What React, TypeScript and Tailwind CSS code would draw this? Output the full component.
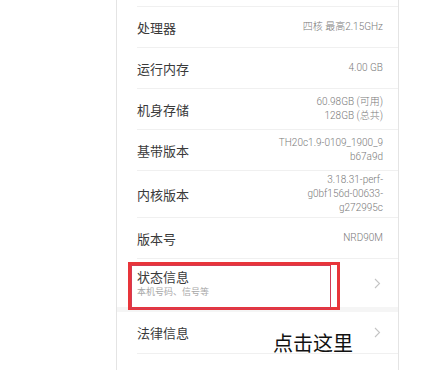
import React from "react";

const font = { fontFamily: '"Noto Sans CJK SC", "Noto Sans", sans-serif' };
const valFont = { fontFamily: 'Roboto, "Noto Sans CJK SC", sans-serif' };

function Chevron() {
  return (
    <svg width="7" height="11" viewBox="0 0 7 11" fill="none">
      <path d="M1 1 L5.5 5.5 L1 10" stroke="#c4c4c4" strokeWidth="1.1" />
    </svg>
  );
}

function Row({
  label,
  values,
  h,
  chevron,
  border = true,
}: {
  label: string;
  values?: string[];
  h: string;
  chevron?: boolean;
  border?: boolean;
}) {
  return (
    <div className="pl-[20px]">
      <div
        className={`flex items-center justify-between pr-[15px] ${h} ${
          border ? "border-b border-[#f0f0f0]" : ""
        }`}
      >
        <span className="text-[13px] text-[#3a3a3a] leading-none">{label}</span>
        {values && (
          <div
            className="flex flex-col items-end text-[10px] font-light leading-[14px] text-[#7a7a7a]"
            style={valFont}
          >
            {values.map((v) => (
              <span key={v}>{v}</span>
            ))}
          </div>
        )}
        {chevron && (
          <span className="mr-[2px] flex">
            <Chevron />
          </span>
        )}
      </div>
    </div>
  );
}

export default function App() {
  return (
    <div className="relative w-[446px] h-[370px] overflow-hidden bg-white" style={font}>
      <div className="ml-[116px] w-[283px] h-[370px] border-l border-r border-[#e4e4e4] bg-white">
        <div className="pl-[20px]">
          <div className="h-[7px] border-b border-[#f0f0f0]" />
        </div>
        <Row label="处理器" values={["四核 最高2.15GHz"]} h="h-[41px]" />
        <Row label="运行内存" values={["4.00 GB"]} h="h-[41px]" />
        <Row label="机身存储" values={["60.98GB (可用)", "128GB (总共)"]} h="h-[41px]" />
        <Row label="基带版本" values={["TH20c1.9-0109_1900_9", "b67a9d"]} h="h-[41px]" />
        <Row
          label="内核版本"
          values={["3.18.31-perf-", "g0bf156d-00633-", "g272995c"]}
          h="h-[47px]"
        />
        <Row label="版本号" values={["NRD90M"]} h="h-[41px]" />
        <div className="pl-[20px]">
          <div className="flex items-center justify-between pr-[15px] h-[48px]">
            <div className="flex flex-col pt-[2px]">
              <span className="text-[13px] text-[#3a3a3a] leading-[16px]">状态信息</span>
              <span className="text-[9px] text-[#a8a8a8] leading-[14px]">本机号码、信号等</span>
            </div>
            <span className="mr-[2px] flex">
              <Chevron />
            </span>
          </div>
        </div>
        <div className="h-[5px] bg-[#f5f5f5]" />
        <Row label="法律信息" h="h-[42px]" chevron />
        <Row label="认证信息" h="h-[46px]" chevron border={false} />
      </div>

      <div className="absolute left-[128px] top-[262px] w-[212px] h-[48px] border-[3px] border-[#e8353a]" />
      <div className="absolute left-[131px] top-[265px] w-[200px] h-[44px] border border-[#d23b55]" />

      <div className="absolute left-[273px] top-[331px] text-[20px] leading-[24px] text-[#111]">
        点击这里
      </div>
    </div>
  );
}
